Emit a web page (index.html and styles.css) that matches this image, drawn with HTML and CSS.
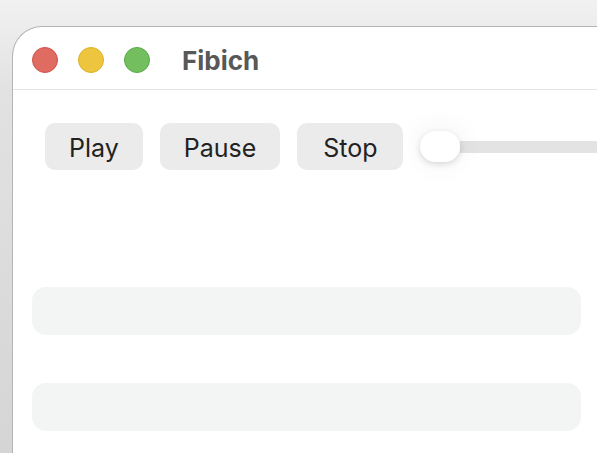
FILE: index.html
```html
<!DOCTYPE html>
<html lang="en">
<head>
    <meta charset="UTF-8">
    <meta name="viewport" content="width=device-width, initial-scale=1.0">
    <title>Fibich</title>
    <link rel="stylesheet" href="styles.css">
</head>
<body>

<div class="window">
    <div class="titlebar">
        <span class="light red"></span>
        <span class="light yellow"></span>
        <span class="light green"></span>
        <h1 class="title">Fibich</h1>
    </div>

    <div class="content">
        <div class="toolbar">
            <button>Play</button>
            <button>Pause</button>
            <button class="wide">Stop</button>
            <div class="slider">
                <span class="thumb"></span>
                <span class="track"></span>
            </div>
        </div>

        <div class="field"></div>
        <div class="field"></div>
    </div>
</div>

</body>
</html>
```

FILE: styles.css
```css
body {
    margin: 0;
    height: 453px;
    overflow: hidden;
    font-family: Inter, "Liberation Sans", sans-serif;
    background: linear-gradient(#f1f1f1 0, #e2e2e2 90px, #d5d5d5 453px);
}
.window {
    margin: 26px 0 0 12px;
    width: 584px;
    height: 426px;
    overflow: hidden;
    background-color: #ffffff;
    border-top: 1px solid #b4b4b4;
    border-left: 1px solid #b4b4b4;
    border-top-left-radius: 30px;
}
.titlebar {
    display: flex;
    align-items: center;
    height: 63px;
    box-sizing: border-box;
    padding: 4px 0 0 19px;
    border-bottom: 1px solid #e4e4e4;
}
.light {
    width: 24px;
    height: 24px;
    border-radius: 50%;
    margin-right: 20px;
}
.red {
    background-color: #e06b61;
    border: 1px solid #cf5149;
}
.yellow {
    background-color: #edc53f;
    border: 1px solid #ddae26;
}
.green {
    background-color: #73bf5f;
    border: 1px solid #59a948;
}
.title {
    margin: 0 0 0 12px;
    font-size: 26px;
    font-weight: 700;
    color: #585858;
}
.content {
    padding-top: 33px;
}
.toolbar {
    display: flex;
    align-items: center;
    gap: 17px;
    padding-left: 32px;
}
button {
    height: 47px;
    padding: 2px 24px 0;
    border: none;
    border-radius: 10px;
    background-color: #ebebeb;
    color: #222;
    font-family: Inter, "Liberation Sans", sans-serif;
    font-size: 25px;
}
button.wide {
    padding: 2px 25px 0 26px;
}
.slider {
    flex: 1;
    display: flex;
    align-items: center;
}
.thumb {
    width: 40px;
    height: 31px;
    border-radius: 16px;
    background-color: #fff;
    box-shadow: 0 2px 6px rgba(0, 0, 0, 0.14), 0 0 30px rgba(0, 0, 0, 0.07);
    position: relative;
    z-index: 1;
}
.track {
    flex: 1;
    height: 12px;
    background-color: #e3e3e3;
}
.field {
    width: 549px;
    height: 48px;
    margin-left: 19px;
    border-radius: 14px;
    background-color: #f3f4f4;
}
.toolbar + .field {
    margin-top: 117px;
}
.field + .field {
    margin-top: 48px;
}
```
